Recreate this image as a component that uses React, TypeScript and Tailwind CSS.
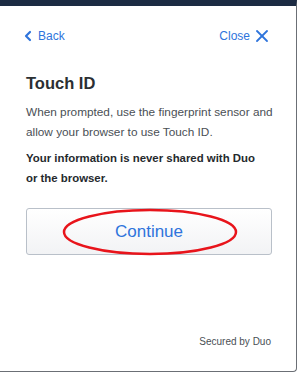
import { ChevronLeft, X } from "lucide-react";

export default function App() {
  return (
    <div className="w-[300px] h-[374px] bg-white font-['Liberation_Sans',Arial,sans-serif] overflow-hidden">
      <div className="relative w-[297px] h-[372px] bg-white border-r border-b border-[#6b6f75] rounded-br-[4px] border-t-[6px] border-t-[#1c2b43] flex flex-col">
        {/* nav */}
        <div className="flex items-center justify-between pl-[20px] pr-[24px] pt-[19px] text-[#2e74dc] text-[12px] h-[40px]">
          <button className="flex items-center gap-[2px]">
            <ChevronLeft size={16} strokeWidth={3.2} />
            <span>Back</span>
          </button>
          <button className="flex items-center gap-[2px]">
            <span>Close</span>
            <X size={20} strokeWidth={2.2} />
          </button>
        </div>

        <div className="pl-[26px] pr-[22px] mt-[25px]">
          <h1 className="text-[16.5px] font-bold text-[#2b2f33] leading-[24px]">Touch ID</h1>
          <p className="mt-[7px] text-[11.8px] leading-[20px] text-[#4a4f55]">
            When prompted, use the fingerprint sensor and allow your browser to use Touch ID.
          </p>
          <p className="mt-[6px] text-[11.4px] leading-[20px] font-bold text-[#25292d] pr-[6px]">
            Your information is never shared with Duo or the browser.
          </p>

          <div className="relative mt-[20px]">
            <button className="w-[246px] h-[47px] rounded-[3px] border border-[#b9c0c9] bg-gradient-to-b from-white to-[#f2f3f5] text-[#2e74dc] text-[17px]">
              Continue
            </button>
            <svg className="absolute left-[36px] top-0 pointer-events-none" width="176" height="48" viewBox="0 0 176 48">
              <ellipse cx="88" cy="24" rx="86" ry="22" fill="none" stroke="#e8141b" strokeWidth="2.5" />
            </svg>
          </div>
        </div>

        <div className="mt-auto mb-[22px] pr-[25px] text-right text-[10px] text-[#4a4f55]">Secured by Duo</div>
      </div>
    </div>
  );
}
